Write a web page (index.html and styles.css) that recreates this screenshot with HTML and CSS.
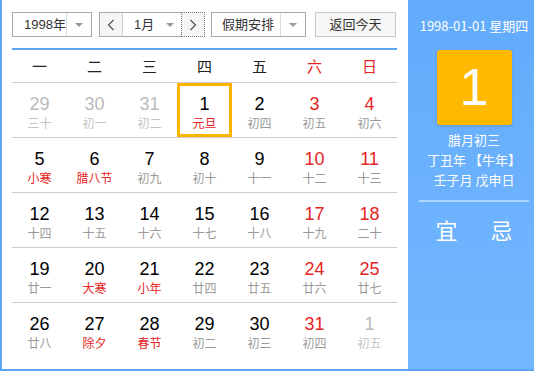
FILE: index.html
```html
<!DOCTYPE html>
<html lang="zh-CN">

<head>
    <meta charset="UTF-8">
    <title>万年历</title>
    <link rel="stylesheet" href="styles.css">
</head>

<body>
    <div class="wrap">
        <div class="main">
            <div class="toolbar">
                <div class="sel year">
                    <span class="val">1998年</span>
                    <span class="arr"><i></i></span>
                </div>
                <div class="sel month">
                    <span class="nav prev"><svg width="8" height="12" viewBox="0 0 8 12"><polyline points="6.5,1 1.5,6 6.5,11" fill="none" stroke="#555" stroke-width="1.2"/></svg></span>
                    <span class="val">1月</span>
                    <span class="arr small"><i></i></span>
                    <span class="nav next"><svg width="8" height="12" viewBox="0 0 8 12"><polyline points="1.5,1 6.5,6 1.5,11" fill="none" stroke="#555" stroke-width="1.2"/></svg></span>
                </div>
                <div class="sel holiday">
                    <span class="val">假期安排</span>
                    <span class="arr"><i></i></span>
                </div>
                <div class="today">返回今天</div>
            </div>

            <div class="week">
                <span>一</span><span>二</span><span>三</span><span>四</span><span>五</span>
                <span class="red">六</span><span class="red">日</span>
            </div>

            <div class="days">
                <div class="row">
                    <div class="day other"><b>29</b><em>三十</em></div>
                    <div class="day other"><b>30</b><em>初一</em></div>
                    <div class="day other"><b>31</b><em>初二</em></div>
                    <div class="day cur"><b>1</b><em class="fest">元旦</em></div>
                    <div class="day"><b>2</b><em>初四</em></div>
                    <div class="day wk"><b>3</b><em>初五</em></div>
                    <div class="day wk"><b>4</b><em>初六</em></div>
                </div>
                <div class="row">
                    <div class="day"><b>5</b><em class="fest">小寒</em></div>
                    <div class="day"><b>6</b><em class="fest">腊八节</em></div>
                    <div class="day"><b>7</b><em>初九</em></div>
                    <div class="day"><b>8</b><em>初十</em></div>
                    <div class="day"><b>9</b><em>十一</em></div>
                    <div class="day wk"><b>10</b><em>十二</em></div>
                    <div class="day wk"><b>11</b><em>十三</em></div>
                </div>
                <div class="row">
                    <div class="day"><b>12</b><em>十四</em></div>
                    <div class="day"><b>13</b><em>十五</em></div>
                    <div class="day"><b>14</b><em>十六</em></div>
                    <div class="day"><b>15</b><em>十七</em></div>
                    <div class="day"><b>16</b><em>十八</em></div>
                    <div class="day wk"><b>17</b><em>十九</em></div>
                    <div class="day wk"><b>18</b><em>二十</em></div>
                </div>
                <div class="row">
                    <div class="day"><b>19</b><em>廿一</em></div>
                    <div class="day"><b>20</b><em class="fest">大寒</em></div>
                    <div class="day"><b>21</b><em class="fest">小年</em></div>
                    <div class="day"><b>22</b><em>廿四</em></div>
                    <div class="day"><b>23</b><em>廿五</em></div>
                    <div class="day wk"><b>24</b><em>廿六</em></div>
                    <div class="day wk"><b>25</b><em>廿七</em></div>
                </div>
                <div class="row">
                    <div class="day"><b>26</b><em>廿八</em></div>
                    <div class="day"><b>27</b><em class="fest">除夕</em></div>
                    <div class="day"><b>28</b><em class="fest">春节</em></div>
                    <div class="day"><b>29</b><em>初二</em></div>
                    <div class="day"><b>30</b><em>初三</em></div>
                    <div class="day wk"><b>31</b><em>初四</em></div>
                    <div class="day other"><b>1</b><em>初五</em></div>
                </div>
            </div>
        </div>

        <div class="side">
            <div class="date">1998-01-01 星期四</div>
            <div class="big">1</div>
            <div class="lunar">
                <div>腊月初三</div>
                <div>丁丑年 【牛年】</div>
                <div>壬子月 戊申日</div>
            </div>
            <div class="yiji">
                <span>宜</span><span>忌</span>
            </div>
        </div>
    </div>
</body>

</html>
```

FILE: styles.css
```css
body {
    margin: 0;
    font-family: "Liberation Sans", "Noto Sans CJK SC", sans-serif;
    background: #ffffff;
}

.wrap {
    display: flex;
    height: 371px;
    box-sizing: border-box;
    border-left: 2px solid #5aa5f5;
    border-bottom: 2px solid #5aa5f5;
}

.main {
    width: 385px;
    padding: 12px 11px 0 10px;
}

.toolbar {
    display: flex;
    height: 25px;
    font-size: 13px;
    color: #333;
}

.sel {
    display: flex;
    box-sizing: border-box;
    height: 25px;
    border: 1px solid #a9a9a9;
    background: #fff;
}

.sel .val {
    flex: 1;
    line-height: 23px;
}

.sel .arr {
    width: 24px;
    border-left: 1px solid #dcdcdc;
    display: flex;
    align-items: center;
    justify-content: center;
}

.sel .arr.small {
    border-left: none;
    width: 22px;
}

.sel .arr i {
    width: 0;
    height: 0;
    border-left: 4px solid transparent;
    border-right: 4px solid transparent;
    border-top: 4px solid #999;
}

.year {
    width: 80px;
}

.year .val {
    padding-left: 11px;
}

.month {
    width: 106px;
    margin-left: 7px;
}

.month .val {
    padding-left: 11px;
}

.nav {
    width: 22px;
    background: #f5f5f5;
    display: flex;
    align-items: center;
    justify-content: center;
}

.prev {
    border-right: 1px solid #d0d0d0;
}

.next {
    border: 1px dotted #777;
    margin: -1px -1px -1px 0;
}

.holiday {
    width: 95px;
    margin-left: 6px;
}

.holiday .val {
    padding-left: 10px;
}

.today {
    width: 81px;
    margin-left: 9px;
    box-sizing: border-box;
    border: 1px solid #c8c8c8;
    background: #f6f6f6;
    text-align: center;
    line-height: 23px;
}

.week {
    display: grid;
    grid-template-columns: repeat(7, 55px);
    margin-top: 11px;
    border-top: 2px solid #5aa5f5;
    height: 32px;
    line-height: 32px;
    text-align: center;
    font-size: 15px;
    color: #222;
    font-family: "Noto Sans CJK SC", sans-serif;
}

.red {
    color: #e62323;
}

.row {
    display: grid;
    grid-template-columns: repeat(7, 55px);
    border-top: 1px solid #cccccc;
}

.day {
    height: 54px;
    box-sizing: border-box;
    padding-top: 12px;
    text-align: center;
}

.day b {
    display: block;
    font-weight: normal;
    font-size: 18px;
    line-height: 18px;
    color: #000;
}

.day em {
    display: block;
    font-style: normal;
    font-size: 12px;
    line-height: 16px;
    margin-top: 2px;
    color: #999;
    font-family: "Noto Sans CJK SC", sans-serif;
}

.day.wk b {
    color: #e62323;
}

.day.other b {
    color: #bbb;
}

.day.other em {
    color: #c4c4c4;
}

.day em.fest {
    color: #e62323;
}

.day.cur {
    box-shadow: inset 0 0 0 3px #ffb400;
}

.side {
    width: 126px;
    padding-left: 6px;
    box-sizing: border-box;
    background: linear-gradient(#62abfb, #74b7ff);
    color: #fff;
    text-align: center;
    font-family: "Noto Sans CJK SC", sans-serif;
}

.date {
    margin-top: 17px;
    font-size: 13px;
    line-height: 18px;
}

.big {
    width: 75px;
    height: 75px;
    margin: 15px auto 0;
    border-radius: 3px;
    background: #ffb900;
    box-shadow: 0 1px 3px rgba(0, 0, 0, 0.15);
    font-family: "Liberation Sans", sans-serif;
    font-size: 52px;
    line-height: 75px;
    font-weight: 300;
}

.lunar {
    margin-top: 5px;
    font-size: 13px;
    line-height: 20px;
}

.yiji {
    margin: 10px auto 0;
    width: 110px;
    border-top: 2px solid rgba(255, 255, 255, 0.45);
    padding-top: 14px;
    display: flex;
    justify-content: center;
    font-size: 22px;
    line-height: 26px;
}

.yiji span {
    width: 55px;
}
```
